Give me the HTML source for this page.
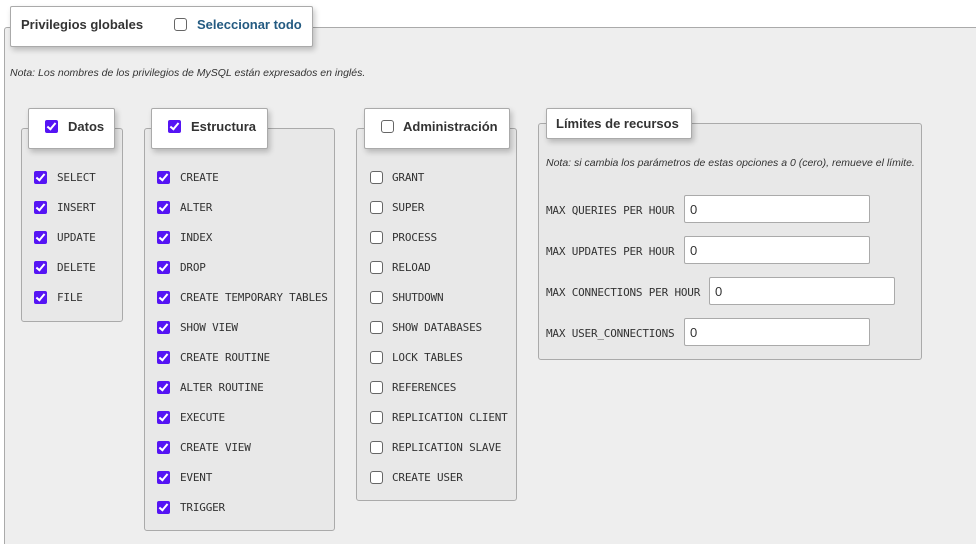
<!DOCTYPE html>
<html><head><meta charset="utf-8"><style>
*{box-sizing:border-box;margin:0;padding:0}
html,body{width:976px;height:544px;overflow:hidden}
body{background:#fff;position:relative;font-family:"Liberation Sans",sans-serif;color:#333}
.a{position:absolute}
.fs{position:absolute;border:1px solid #aaa;border-radius:3px;background:#e8e8e8}
.lg{position:absolute;background:#fff;border:1px solid #aaa;border-radius:2px;box-shadow:2px 3px 6px rgba(0,0,0,.22);font-weight:bold;font-size:13px;color:#333}
.cb{position:absolute;width:13px;height:13px;border-radius:2px}
.on{background:#5514f4}
.on::after{content:"";position:absolute;left:4px;top:1px;width:3px;height:7px;border:solid #fff;border-width:0 2px 2px 0;transform:rotate(40deg)}
.off{background:#fff;border:1px solid #666;border-radius:3px}
.it{position:absolute;font-family:"DejaVu Sans Mono","Liberation Mono",monospace;font-size:11px;letter-spacing:-0.2px;color:#333}
.in{position:absolute;background:#fff;border:1px solid #aaa;border-radius:2px;height:28px;width:186px;font-size:13px;padding:6px 5px}
.nt{position:absolute;font-style:italic;font-size:10.5px}
</style></head><body>
<div class="a" style="left:4px;top:27px;width:980px;height:530px;border:1px solid #aaa;border-radius:3px;background:#eee"></div>
<div class="lg" style="left:10px;top:6px;width:303px;height:41px"></div>
<div class="a" style="left:21px;top:17px;font-weight:bold;font-size:13px">Privilegios globales</div>
<div class="cb off" style="left:174px;top:18px"></div>
<div class="a" style="left:197px;top:17px;font-weight:bold;font-size:13px;color:#235a81">Seleccionar todo</div>
<div class="nt" style="left:10px;top:67px">Nota: Los nombres de los privilegios de MySQL están expresados en inglés.</div>

<div class="fs" style="left:21px;top:128px;width:102px;height:194px"></div>
<div class="lg" style="left:28px;top:108px;width:87px;height:41px"></div>
<div class="cb on" style="left:45px;top:120px"></div><div class="a" style="left:68px;top:119px;font-weight:bold;font-size:13px">Datos</div>

<div class="fs" style="left:144px;top:128px;width:191px;height:403px"></div>
<div class="lg" style="left:151px;top:108px;width:117px;height:41px"></div>
<div class="cb on" style="left:168px;top:120px"></div><div class="a" style="left:191px;top:119px;font-weight:bold;font-size:13px">Estructura</div>

<div class="fs" style="left:356px;top:128px;width:161px;height:373px"></div>
<div class="lg" style="left:364px;top:108px;width:146px;height:41px"></div>
<div class="cb off" style="left:381px;top:120px"></div><div class="a" style="left:403px;top:119px;font-weight:bold;font-size:13px">Administración</div>

<div class="fs" style="left:538px;top:123px;width:384px;height:237px"></div>
<div class="lg" style="left:546px;top:108px;width:146px;height:31px"></div>
<div class="a" style="left:556px;top:116px;font-weight:bold;font-size:13px">Límites de recursos</div>
<div class="nt" style="left:546px;top:157px">Nota: si cambia los parámetros de estas opciones a 0 (cero), remueve el límite.</div>
<div class="it" style="left:546px;top:204px">MAX QUERIES PER HOUR</div><div class="in" style="left:684px;top:195px">0</div>
<div class="it" style="left:546px;top:245px">MAX UPDATES PER HOUR</div><div class="in" style="left:684px;top:236px">0</div>
<div class="it" style="left:546px;top:286px">MAX CONNECTIONS PER HOUR</div><div class="in" style="left:709px;top:277px">0</div>
<div class="it" style="left:546px;top:327px">MAX USER_CONNECTIONS</div><div class="in" style="left:684px;top:318px">0</div>

<div class="cb on" style="left:34px;top:171px"></div><div class="it" style="left:57px;top:171px">SELECT</div>
<div class="cb on" style="left:34px;top:201px"></div><div class="it" style="left:57px;top:201px">INSERT</div>
<div class="cb on" style="left:34px;top:231px"></div><div class="it" style="left:57px;top:231px">UPDATE</div>
<div class="cb on" style="left:34px;top:261px"></div><div class="it" style="left:57px;top:261px">DELETE</div>
<div class="cb on" style="left:34px;top:291px"></div><div class="it" style="left:57px;top:291px">FILE</div>

<div class="cb on" style="left:157px;top:171px"></div><div class="it" style="left:180px;top:171px">CREATE</div>
<div class="cb on" style="left:157px;top:201px"></div><div class="it" style="left:180px;top:201px">ALTER</div>
<div class="cb on" style="left:157px;top:231px"></div><div class="it" style="left:180px;top:231px">INDEX</div>
<div class="cb on" style="left:157px;top:261px"></div><div class="it" style="left:180px;top:261px">DROP</div>
<div class="cb on" style="left:157px;top:291px"></div><div class="it" style="left:180px;top:291px">CREATE TEMPORARY TABLES</div>
<div class="cb on" style="left:157px;top:321px"></div><div class="it" style="left:180px;top:321px">SHOW VIEW</div>
<div class="cb on" style="left:157px;top:351px"></div><div class="it" style="left:180px;top:351px">CREATE ROUTINE</div>
<div class="cb on" style="left:157px;top:381px"></div><div class="it" style="left:180px;top:381px">ALTER ROUTINE</div>
<div class="cb on" style="left:157px;top:411px"></div><div class="it" style="left:180px;top:411px">EXECUTE</div>
<div class="cb on" style="left:157px;top:441px"></div><div class="it" style="left:180px;top:441px">CREATE VIEW</div>
<div class="cb on" style="left:157px;top:471px"></div><div class="it" style="left:180px;top:471px">EVENT</div>
<div class="cb on" style="left:157px;top:501px"></div><div class="it" style="left:180px;top:501px">TRIGGER</div>

<div class="cb off" style="left:370px;top:171px"></div><div class="it" style="left:392px;top:171px">GRANT</div>
<div class="cb off" style="left:370px;top:201px"></div><div class="it" style="left:392px;top:201px">SUPER</div>
<div class="cb off" style="left:370px;top:231px"></div><div class="it" style="left:392px;top:231px">PROCESS</div>
<div class="cb off" style="left:370px;top:261px"></div><div class="it" style="left:392px;top:261px">RELOAD</div>
<div class="cb off" style="left:370px;top:291px"></div><div class="it" style="left:392px;top:291px">SHUTDOWN</div>
<div class="cb off" style="left:370px;top:321px"></div><div class="it" style="left:392px;top:321px">SHOW DATABASES</div>
<div class="cb off" style="left:370px;top:351px"></div><div class="it" style="left:392px;top:351px">LOCK TABLES</div>
<div class="cb off" style="left:370px;top:381px"></div><div class="it" style="left:392px;top:381px">REFERENCES</div>
<div class="cb off" style="left:370px;top:411px"></div><div class="it" style="left:392px;top:411px">REPLICATION CLIENT</div>
<div class="cb off" style="left:370px;top:441px"></div><div class="it" style="left:392px;top:441px">REPLICATION SLAVE</div>
<div class="cb off" style="left:370px;top:471px"></div><div class="it" style="left:392px;top:471px">CREATE USER</div>
</body></html>
